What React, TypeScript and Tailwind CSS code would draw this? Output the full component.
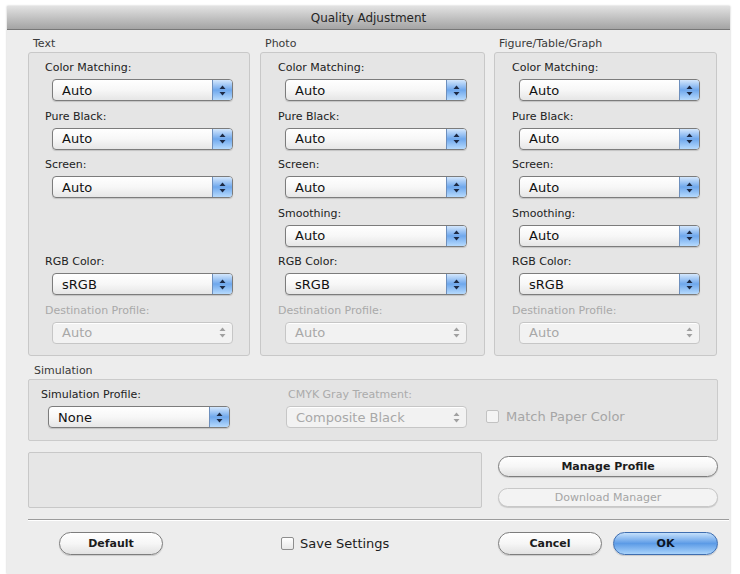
import React from "react";

// Mac OS X style "Quality Adjustment" printer dialog

type Row = { label: string; value: string; disabled?: boolean } | null;

const COLUMNS: { title: string; width: string; rows: Row[] }[] = [
  {
    title: "Text",
    width: "w-[222px]",
    rows: [
      { label: "Color Matching:", value: "Auto" },
      { label: "Pure Black:", value: "Auto" },
      { label: "Screen:", value: "Auto" },
      null,
      { label: "RGB Color:", value: "sRGB" },
      { label: "Destination Profile:", value: "Auto", disabled: true },
    ],
  },
  {
    title: "Photo",
    width: "w-[225px]",
    rows: [
      { label: "Color Matching:", value: "Auto" },
      { label: "Pure Black:", value: "Auto" },
      { label: "Screen:", value: "Auto" },
      { label: "Smoothing:", value: "Auto" },
      { label: "RGB Color:", value: "sRGB" },
      { label: "Destination Profile:", value: "Auto", disabled: true },
    ],
  },
  {
    title: "Figure/Table/Graph",
    width: "w-[223px]",
    rows: [
      { label: "Color Matching:", value: "Auto" },
      { label: "Pure Black:", value: "Auto" },
      { label: "Screen:", value: "Auto" },
      { label: "Smoothing:", value: "Auto" },
      { label: "RGB Color:", value: "sRGB" },
      { label: "Destination Profile:", value: "Auto", disabled: true },
    ],
  },
];

function Arrows({ color }: { color: string }) {
  return (
    <svg width="7" height="11" viewBox="0 0 7 11">
      <path d="M3.5 0.5 L6.5 4 L0.5 4 Z" fill={color} />
      <path d="M3.5 10.5 L6.5 7 L0.5 7 Z" fill={color} />
    </svg>
  );
}

function Select({ value, disabled, width = "w-[181px]" }: { value: string; disabled?: boolean; width?: string }) {
  if (disabled) {
    return (
      <div className={`${width} h-[22px] flex items-center rounded-[4px] border border-[#c6c6c6] bg-[#f2f2f2] shadow-[inset_0_1px_0_#fff]`}>
        <span className="flex-1 pl-[9px] text-[13px] text-[#a8a8a8] leading-none">{value}</span>
        <div className="w-[20px] h-full flex items-center justify-center">
          <Arrows color="#a0a0a0" />
        </div>
      </div>
    );
  }
  return (
    <div className={`${width} h-[22px] flex items-center rounded-[4px] border border-[#7c7c7c] bg-gradient-to-b from-white via-[#f7f7f7] to-[#e6e6e6] shadow-[0_1px_1px_rgba(0,0,0,0.15)] overflow-hidden`}>
      <span className="flex-1 pl-[9px] text-[13px] text-[#111] leading-none">{value}</span>
      <div className="w-[20px] h-full flex items-center justify-center border-l border-[#6d8fbd] bg-gradient-to-b from-[#d4e7fc] via-[#6ea7ec] to-[#b6dafd]">
        <Arrows color="#1d2a45" />
      </div>
    </div>
  );
}

function Checkbox({ disabled }: { disabled?: boolean }) {
  return (
    <div
      className={`w-[13px] h-[13px] rounded-[2px] border ${
        disabled ? "border-[#c2c2c2] bg-[#f4f4f4]" : "border-[#8e8e8e] bg-gradient-to-b from-white to-[#e8e8e8]"
      }`}
    />
  );
}

function Button({ children, width, primary, disabled, h = "h-[23px]" }: { children: React.ReactNode; width: string; primary?: boolean; disabled?: boolean; h?: string }) {
  const look = primary
    ? "border-[#3f6eb0] bg-gradient-to-b from-[#c5e0fb] via-[#5c9be6] to-[#a9d3fb] text-[#0c1626]"
    : disabled
    ? "border-[#c8c8c8] bg-[#f3f3f3] text-[#a5a5a5]"
    : "border-[#7d7d7d] bg-gradient-to-b from-white via-[#f6f6f6] to-[#e2e2e2] text-[#1c1c1c]";
  return (
    <div className={`${width} ${h} rounded-full border flex items-center justify-center shadow-[0_1px_1px_rgba(0,0,0,0.15)] ${look}`}>
      <span className={`text-[11px] leading-none ${disabled ? "font-normal" : "font-semibold"}`}>{children}</span>
    </div>
  );
}

export default function App() {
  return (
    <div className="w-[740px] h-[574px] bg-white pt-[6px] pl-[7px] font-['DejaVu_Sans',sans-serif] overflow-hidden">
      <div className="w-[723px] h-[568px] bg-[#ededed] flex flex-col shadow-[0_0_2px_rgba(0,0,0,0.25)]">
        {/* title bar */}
        <div className="h-[24px] shrink-0 flex items-center justify-center bg-gradient-to-b from-[#e2e2e2] to-[#a4a4a4] border-b border-[#777]">
          <span className="text-[12px] text-[#262626]">Quality Adjustment</span>
        </div>

        <div className="pl-[21px] pt-[7px] flex flex-col">
          {/* three group boxes */}
          <div className="flex">
            {COLUMNS.map((col, ci) => (
              <div key={col.title} className={`${col.width} ${ci === 1 ? "ml-[10px]" : ci === 2 ? "ml-[9px]" : ""} flex flex-col`}>
                <div className="h-[14px] mb-[1px] pl-[5px] text-[11px] leading-[14px] text-[#3a3a3a]">{col.title}</div>
                <div className="h-[304px] rounded-[3px] border border-[#c8c8c8] bg-[#e5e5e5] pt-[8px] flex flex-col">
                  {col.rows.map((row, ri) =>
                    row ? (
                      <div key={ri} className="h-[48.5px] shrink-0 flex flex-col">
                        <div className={`h-[14px] mb-[4px] ${ci === 0 ? "pl-[16px]" : "pl-[17px]"} text-[11px] leading-[14px] ${row.disabled ? "text-[#a9a9a9]" : "text-[#222]"}`}>
                          {row.label}
                        </div>
                        <div className={ci === 0 ? "pl-[23px]" : "pl-[24px]"}>
                          <Select value={row.value} disabled={row.disabled} width={ci === 1 ? "w-[182px]" : "w-[181px]"} />
                        </div>
                      </div>
                    ) : (
                      <div key={ri} className="h-[48.5px] shrink-0" />
                    )
                  )}
                </div>
              </div>
            ))}
          </div>

          {/* simulation */}
          <div className="mt-[8px] h-[14px] mb-[1px] pl-[6px] text-[11px] leading-[14px] text-[#3a3a3a]">Simulation</div>
          <div className="w-[690px] h-[62px] rounded-[2px] border border-[#cbcbcb] bg-[#e4e4e4] pt-[8px] flex">
            <div className="pl-[12px] flex flex-col">
              <div className="h-[14px] mb-[4px] text-[11px] leading-[14px] text-[#222]">Simulation Profile:</div>
              <div className="pl-[7px]">
                <Select value="None" width="w-[182px]" />
              </div>
            </div>
            <div className="ml-[56px] flex flex-col">
              <div className="h-[14px] mb-[4px] pl-[2px] text-[11px] leading-[14px] text-[#ababab]">CMYK Gray Treatment:</div>
              <Select value="Composite Black" disabled width="w-[181px]" />
            </div>
            <div className="ml-[19px] mt-[21px] h-[14px] flex items-center gap-[7px] self-start">
              <Checkbox disabled />
              <span className="text-[13px] leading-none text-[#a6a6a6]">Match Paper Color</span>
            </div>
          </div>

          {/* message area + profile buttons */}
          <div className="mt-[11px] flex">
            <div className="w-[454px] h-[56px] rounded-[2px] border border-[#c8c8c8] bg-[#e6e6e6]" />
            <div className="ml-[16px] pt-[4px] flex flex-col gap-[11px]">
              <Button width="w-[220px]" h="h-[21px]">Manage Profile</Button>
              <Button width="w-[220px]" h="h-[19px]" disabled>Download Manager</Button>
            </div>
          </div>

          {/* separator */}
          <div className="mt-[11px] w-[701px] h-[2px] border-t border-[#9c9c9c] border-b-white border-b" />

          {/* bottom buttons */}
          <div className="mt-[11px] w-[690px] flex items-center">
            <div className="ml-[31px]">
              <Button width="w-[104px]">Default</Button>
            </div>
            <div className="ml-[118px] flex items-center gap-[6px]">
              <Checkbox />
              <span className="text-[13px] leading-none text-[#1c1c1c]">Save Settings</span>
            </div>
            <div className="ml-auto flex items-center gap-[11px]">
              <Button width="w-[104px]">Cancel</Button>
              <Button width="w-[105px]" primary>OK</Button>
            </div>
          </div>
        </div>
      </div>
    </div>
  );
}
